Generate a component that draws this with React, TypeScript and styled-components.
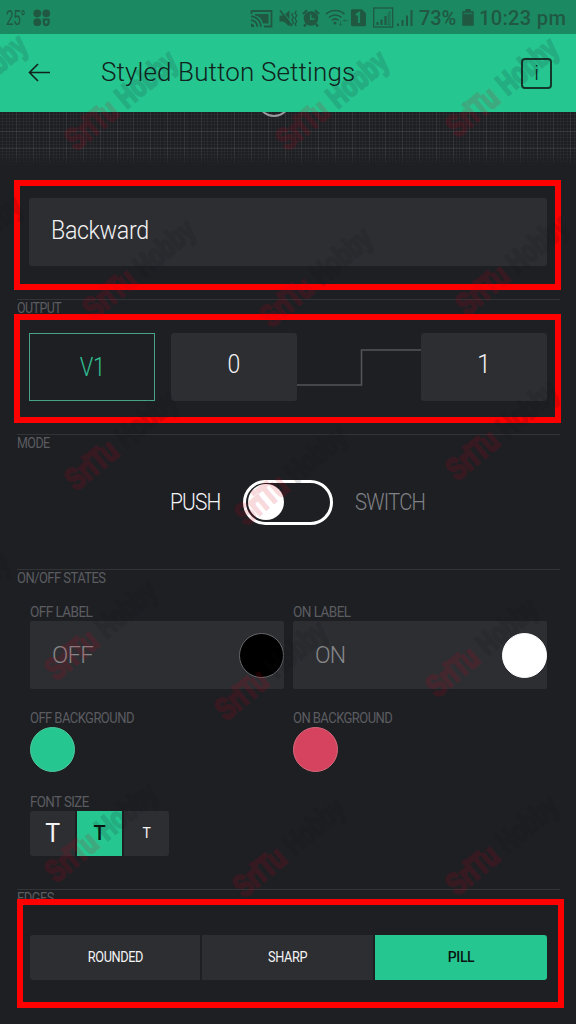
import React from 'react';
import styled, { createGlobalStyle, css } from 'styled-components';

const green = '#26c690';
const bg = '#1e1f23';
const field = '#2d2e32';
const statusInk = '#205842';

const GlobalStyle = createGlobalStyle`
  * { box-sizing: border-box; }
  body { margin: 0; background: ${bg}; }
`;

const Screen = styled.div`
  position: relative;
  width: 576px;
  height: 1024px;
  overflow: hidden;
  display: flex;
  flex-direction: column;
  background: ${bg};
  font-family: Roboto, sans-serif;
  font-weight: 300;
  color: #f2f2f4;
`;

/* Narrows a run of text horizontally. */
const Fit = styled.span<{ $scale: number; $origin?: string }>`
  display: inline-block;
  transform: scaleX(${p => p.$scale});
  transform-origin: ${p => p.$origin ?? 'left'} center;
  white-space: nowrap;
`;

const StatusBar = styled.div`
  display: flex;
  align-items: center;
  height: 34px;
  flex: none;
  padding: 1px 7px 0 6px;
  background: #1b8a62;
  color: ${statusInk};
  svg { display: block; flex: none; }
`;

const Temperature = styled.div`
  width: 27px;
  font-size: 20px;
  font-weight: 400;
  letter-spacing: -0.5px;
`;

const StatusIcons = styled.div`
  display: flex;
  align-items: center;
  margin-left: auto;
`;

const StatusText = styled.span<{ $width: number; $spacing: number }>`
  width: ${p => p.$width}px;
  padding-left: 5px;
  font-size: 20px;
  font-weight: 500;
  letter-spacing: ${p => p.$spacing}px;
  white-space: nowrap;
`;

const Header = styled.header`
  display: flex;
  align-items: center;
  height: 78px;
  flex: none;
  padding: 0 24px 0 28px;
  background: ${green};
  color: #10231c;
  svg { display: block; }
`;

const Title = styled.h1`
  margin: -2px 0 0 50px;
  flex: 1;
  font-size: 26px;
  font-weight: 300;
  line-height: 30px;
  letter-spacing: 0.13px;
  white-space: nowrap;
`;

const InfoButton = styled.button`
  width: 31px;
  height: 31px;
  padding: 0;
  border: 2px solid #14372b;
  border-radius: 4px;
  background: none;
  color: #10231c;
  font: 300 21px/27px Roboto, sans-serif;
`;

const Preview = styled.div`
  height: 53px;
  flex: none;
  display: flex;
  justify-content: center;
  overflow: hidden;
  padding-right: 29px;
  background-color: #1e1f23;
  background-image:
    linear-gradient(to bottom, rgba(30,31,35,0) 80%, #1e1f23 100%),
    repeating-linear-gradient(to right, transparent 0 15.8px, rgba(255,255,255,.05) 15.8px 16.8px),
    repeating-linear-gradient(to bottom, transparent 0 2.3px, rgba(255,255,255,.03) 2.3px 3.3px),
    repeating-linear-gradient(to right, transparent 0 2.36px, rgba(255,255,255,.035) 2.36px 3.36px),
    linear-gradient(to bottom, transparent 19px, #303135 19px 20px, transparent 20px 36px, #303135 36px 37px, transparent 37px);
`;

const PreviewKnob = styled.div`
  width: 34px;
  height: 34px;
  margin-top: -29px;
  border: 2px solid #98999b;
  border-radius: 50%;
  flex: none;
`;

const Frame = styled.section<{ $top: number; $left?: number; $height: number; $pad: string }>`
  display: flex;
  width: 547px;
  height: ${p => p.$height}px;
  flex: none;
  margin: ${p => p.$top}px 0 0 ${p => p.$left ?? 14}px;
  padding: ${p => p.$pad};
  border: 6px solid #fe0000;
`;

const NameField = styled.div`
  flex: 1;
  height: 68px;
  padding-left: 22px;
  border-radius: 3px;
  background: ${field};
  font-size: 25px;
  line-height: 66px;
  letter-spacing: -0.4px;
`;

const SectionHead = styled.div<{ $top: number; $height: number }>`
  width: 543px;
  height: ${p => p.$height}px;
  flex: none;
  margin: ${p => p.$top}px 0 0 17px;
  border-top: 1px solid #323337;
  overflow: hidden;
`;

const CaptionLine = styled.div`
  color: #5b5c60;
  font-size: 14px;
  font-weight: 400;
  line-height: 17px;
  letter-spacing: -0.6px;
`;

const Caption = ({ fit, children }: { fit: number; children: string }) => (
  <CaptionLine><Fit $scale={fit}>{children}</Fit></CaptionLine>
);

const Pin = styled.div`
  width: 126px;
  height: 68px;
  border: 1px solid #46a584;
  color: #30bf90;
  font-size: 25px;
  line-height: 67px;
  letter-spacing: -0.3px;
  text-align: center;
`;

const Value = styled.div<{ $gap?: number }>`
  width: 126px;
  height: 68px;
  margin-left: ${p => p.$gap ?? 0}px;
  border-radius: 3px;
  background: ${field};
  font-size: 25px;
  line-height: 64px;
  text-align: center;
`;

const Step = styled.svg`
  display: block;
  width: 124px;
  height: 68px;
`;

const ModeRow = styled.div`
  display: flex;
  align-items: center;
  height: 45px;
  flex: none;
  margin-top: 28px;
  padding-left: 170px;
`;

const ModeLabel = styled.div<{ $on?: boolean; $width: number }>`
  width: ${p => p.$width}px;
  font-size: 23px;
  letter-spacing: -0.9px;
  color: ${p => (p.$on ? '#f5f5f6' : '#808185')};
`;

const Toggle = styled.div`
  width: 90px;
  height: 45px;
  padding: 1px 2px;
  margin-right: 22px;
  border: 3px solid #fff;
  border-radius: 23px;
`;

const Knob = styled.div`
  width: 36px;
  height: 36px;
  border-radius: 50%;
  background: #fff;
`;

const StateGrid = styled.div`
  display: grid;
  grid-template-columns: 254px 254px;
  column-gap: 9px;
  row-gap: 21px;
  flex: none;
  margin: 17px 0 0 30px;
`;

const LabelField = styled.div`
  display: flex;
  align-items: center;
  justify-content: space-between;
  height: 68px;
  padding-left: 22px;
  border-radius: 2px;
  background: ${field};
  color: #86878a;
  font-size: 24px;
  letter-spacing: -0.8px;
`;

const Swatch = styled.div<{ $color: string; $edge: string }>`
  width: 45px;
  height: 45px;
  border: 1px solid ${p => p.$edge};
  border-radius: 50%;
  background: ${p => p.$color};
`;

const FontSize = styled.div`
  flex: none;
  margin: 22px 0 0 30px;
`;

const SizeSegments = styled.div`
  display: flex;
  gap: 2px;
`;

const EdgeSegments = styled.div`
  display: grid;
  grid-template-columns: 170px 171px 172px;
  gap: 2px;
`;

const active = css`
  background: ${green};
  color: #0a1511;
  font-weight: 500;
`;

const Segment = styled.div<{ $active?: boolean; $size: number }>`
  min-width: 45px;
  height: 45px;
  background: ${field};
  color: #f4f4f5;
  font-size: ${p => p.$size}px;
  font-weight: 400;
  line-height: 45px;
  letter-spacing: -0.4px;
  text-align: center;
  ${p => p.$active && active}
  &:first-child { border-radius: 3px 0 0 3px; }
  &:last-child { border-radius: 0 3px 3px 0; }
`;

const WatermarkLayer = styled.svg`
  position: absolute;
  inset: 0;
  pointer-events: none;
  font-family: "Liberation Sans Narrow", "Liberation Sans", sans-serif;
  font-weight: 700;
  font-size: 31px;
`;

const marks: [number, number][] = [
  [-75, 122], [75, 138], [286, 138], [456, 125],
  [-80, 283], [93, 307], [270, 315], [466, 303],
  [75, 478], [245, 513], [456, 468], [-92, 640],
  [55, 668], [225, 708], [436, 685],
  [55, 870], [243, 885], [456, 883],
];

const Watermarks = () => (
  <WatermarkLayer width="576" height="1024" viewBox="0 0 576 1024">
    {marks.map(([x, y]) => (
      <g key={`${x},${y}`} transform={`translate(${x} ${y}) rotate(-40)`} strokeWidth="2.4">
        <text x="-8" y="11" textLength="58" lengthAdjust="spacingAndGlyphs" fill="#d00018" stroke="#d00018" opacity=".14">SriTu</text>
        <text x="58" y="11" textLength="69" lengthAdjust="spacingAndGlyphs" fill="#101018" stroke="#101018" opacity=".13">Hobby</text>
      </g>
    ))}
  </WatermarkLayer>
);

const AppsIcon = () => (
  <svg width="18" height="18" fill={statusInk}>
    <circle cx="4.3" cy="4.3" r="3.9" /><circle cx="13.3" cy="4.3" r="3.9" />
    <circle cx="4.3" cy="13.2" r="3.9" />
    <path d="M9.700 9.500h7v4.500c0 2-1.500 3.200-3.500 3.200s-3.500-1.200-3.500-3.200z" />
    <path d="M12 11.500h2.500v2c0 .8-.5 1.200-1.250 1.200S12 14.300 12 13.500z" fill="#1b8a62" />
  </svg>
);

const StatusGlyphs = () => (
  <svg width="165" height="24" viewBox="248 5 165 24" fill="none" stroke={statusInk}>
    <path d="M250.500 13V10H270.500V25.500H263" strokeWidth="1.800" />
    <path d="M254 13H267.500V22.500H262C261 18 258 15 254 14.500z" fill={statusInk} stroke="none" />
    <path d="M250 15.500A10 10 0 0 1 260 25.800M250 19.200A6.500 6.500 0 0 1 256.300 25.800" strokeWidth="1.800" />
    <path d="M250 22.500a3.500 3.500 0 0 1 3.300 3.500H250z" fill={statusInk} stroke="none" />
    <path d="M278.500 14.500h4l6-5v16l-6-5h-4z" fill={statusInk} stroke="none" />
    <path d="M280 8.500L292 24" stroke="#1b8a62" strokeWidth="1.200" />
    <path d="M279 9.500L291 25" strokeWidth="1.800" />
    <path d="M292 12l-1.200 2 1.700 2.300-1.700 2.500 1.700 2.500-1.200 2M295.300 9.500l-1.300 2.500 1.800 2.500-1.800 3 1.800 3-1.800 2.500 1.300 2" strokeWidth="1.300" />
    <circle cx="310" cy="17.500" r="7.300" fill={statusInk} stroke="none" />
    <path d="M302 13l4-3.800M318 13l-4-3.800M305 23l-2 2.500M315 23l2 2.500" strokeWidth="2.200" />
    <path d="M309.700 13.500v4.500h4" stroke="#1b8a62" strokeWidth="1.500" />
    <path d="M325 13.200a13.500 13.500 0 0 1 18.500 0M328 16.500a9 9 0 0 1 12.500 0M331 19.300a5 5 0 0 1 6.500 0" strokeWidth="1.600" />
    <circle cx="334" cy="22" r="1.500" fill={statusInk} stroke="none" />
    <path d="M339.500 20v4.500m-1.700-1.700l1.700 1.700 1.700-1.700M347 19.500h-4.500m1.500-1.500l-1.500 1.500 1.500 1.500" strokeWidth="1" opacity=".55" />
    <path d="M350 9.500q0-1.200 1.200-1.200H361L365 12.200V24q0 1.200-1.200 1.200H351.200Q350 25.200 350 24z" fill={statusInk} stroke="none" />
    <path d="M355 14l3-2v10" stroke="#1b8a62" strokeWidth="2.200" />
    <rect x="372.700" y="7" width="19" height="19" strokeWidth="1.300" />
    <path d="M376.500 21v3M380.500 18.500v5.500M384.500 15v9" strokeWidth="2.100" />
    <path d="M387.200 24V12.500l1.800-2V24z" strokeWidth=".7" />
    <path d="M397 22.500v2.500M401.500 19v6M406 14.500v10.500M410.500 9v16" strokeWidth="2" />
  </svg>
);

const BatteryIcon = () => (
  <svg width="12" height="19" fill={statusInk}>
    <path d="M3.300 1h5.400v2H11q.7 0 .7.700V17q0 .8-.7.800H1q-.7 0-.7-.8V3.700Q.3 3 1 3h2.300z" />
    <path d="M1.500 4.500h9v1.800h-9z" fill="#1b8a62" opacity=".6" />
  </svg>
);

export default function App() {
  return (
    <Screen>
      <GlobalStyle />
      <StatusBar>
        <Temperature><Fit $scale={0.68}>25°</Fit></Temperature>
        <AppsIcon />
        <StatusIcons>
          <StatusGlyphs />
          <StatusText $width={48} $spacing={-0.1}>73%</StatusText>
          <BatteryIcon />
          <StatusText $width={95} $spacing={0.35}>10:23 pm</StatusText>
        </StatusIcons>
      </StatusBar>
      <Header>
        <svg width="23" height="20" fill="none" stroke="#10231c" strokeWidth="1.600">
          <path d="M22 9.500H1.500M10 1L1.500 9.500l8.500 8.500" />
        </svg>
        <Title>Styled Button Settings</Title>
        <InfoButton>i</InfoButton>
      </Header>
      <Preview><PreviewKnob /></Preview>

      <Frame $top={15} $height={110} $pad="12px 8px 0 9px">
        <NameField><Fit $scale={0.93}>Backward</Fit></NameField>
      </Frame>

      <SectionHead $top={9} $height={15}><Caption fit={0.89}>OUTPUT</Caption></SectionHead>
      <Frame $top={0} $height={109} $pad="13px 8px 0 9px">
        <Pin><Fit $scale={0.88} $origin="center">V1</Fit></Pin>
        <Value $gap={16}><Fit $scale={0.92} $origin="center">0</Fit></Value>
        <Step viewBox="0 0 124 68" fill="none" stroke="#54555a" strokeWidth="1.500">
          <path d="M0 52H64.500V17H124" />
        </Step>
        <Value>1</Value>
      </Frame>

      <SectionHead $top={11} $height={18}><Caption fit={0.89}>MODE</Caption></SectionHead>
      <ModeRow>
        <ModeLabel $on $width={73}><Fit $scale={0.91}>PUSH</Fit></ModeLabel>
        <Toggle><Knob /></Toggle>
        <ModeLabel $width={80}><Fit $scale={0.885}>SWITCH</Fit></ModeLabel>
      </ModeRow>

      <SectionHead $top={44} $height={18}><Caption fit={0.93}>ON/OFF STATES</Caption></SectionHead>
      <StateGrid>
        <div>
          <Caption fit={0.97}>OFF LABEL</Caption>
          <LabelField>OFF<Swatch $color="#000" $edge="#66676a" /></LabelField>
        </div>
        <div>
          <Caption fit={0.97}>ON LABEL</Caption>
          <LabelField><Fit $scale={0.96}>ON</Fit><Swatch $color="#fff" $edge="#fff" /></LabelField>
        </div>
        <div>
          <Caption fit={0.93}>OFF BACKGROUND</Caption>
          <Swatch $color={green} $edge="#4fca9f" />
        </div>
        <div>
          <Caption fit={0.93}>ON BACKGROUND</Caption>
          <Swatch $color="#d5435e" $edge="#d9687c" />
        </div>
      </StateGrid>
      <FontSize>
        <Caption fit={0.95}>FONT SIZE</Caption>
        <SizeSegments>
          <Segment $size={25}>T</Segment>
          <Segment $size={20} $active>T</Segment>
          <Segment $size={14}>T</Segment>
        </SizeSegments>
      </FontSize>

      <SectionHead $top={33} $height={10}><Caption fit={0.92}>EDGES</Caption></SectionHead>
      <Frame $top={0} $left={17} $height={109} $pad="30px 11px 0 7px">
        <EdgeSegments>
          <Segment $size={14}><Fit $scale={0.91} $origin="center">ROUNDED</Fit></Segment>
          <Segment $size={14}><Fit $scale={0.91} $origin="center">SHARP</Fit></Segment>
          <Segment $size={14} $active>PILL</Segment>
        </EdgeSegments>
      </Frame>
      <Watermarks />
    </Screen>
  );
}
